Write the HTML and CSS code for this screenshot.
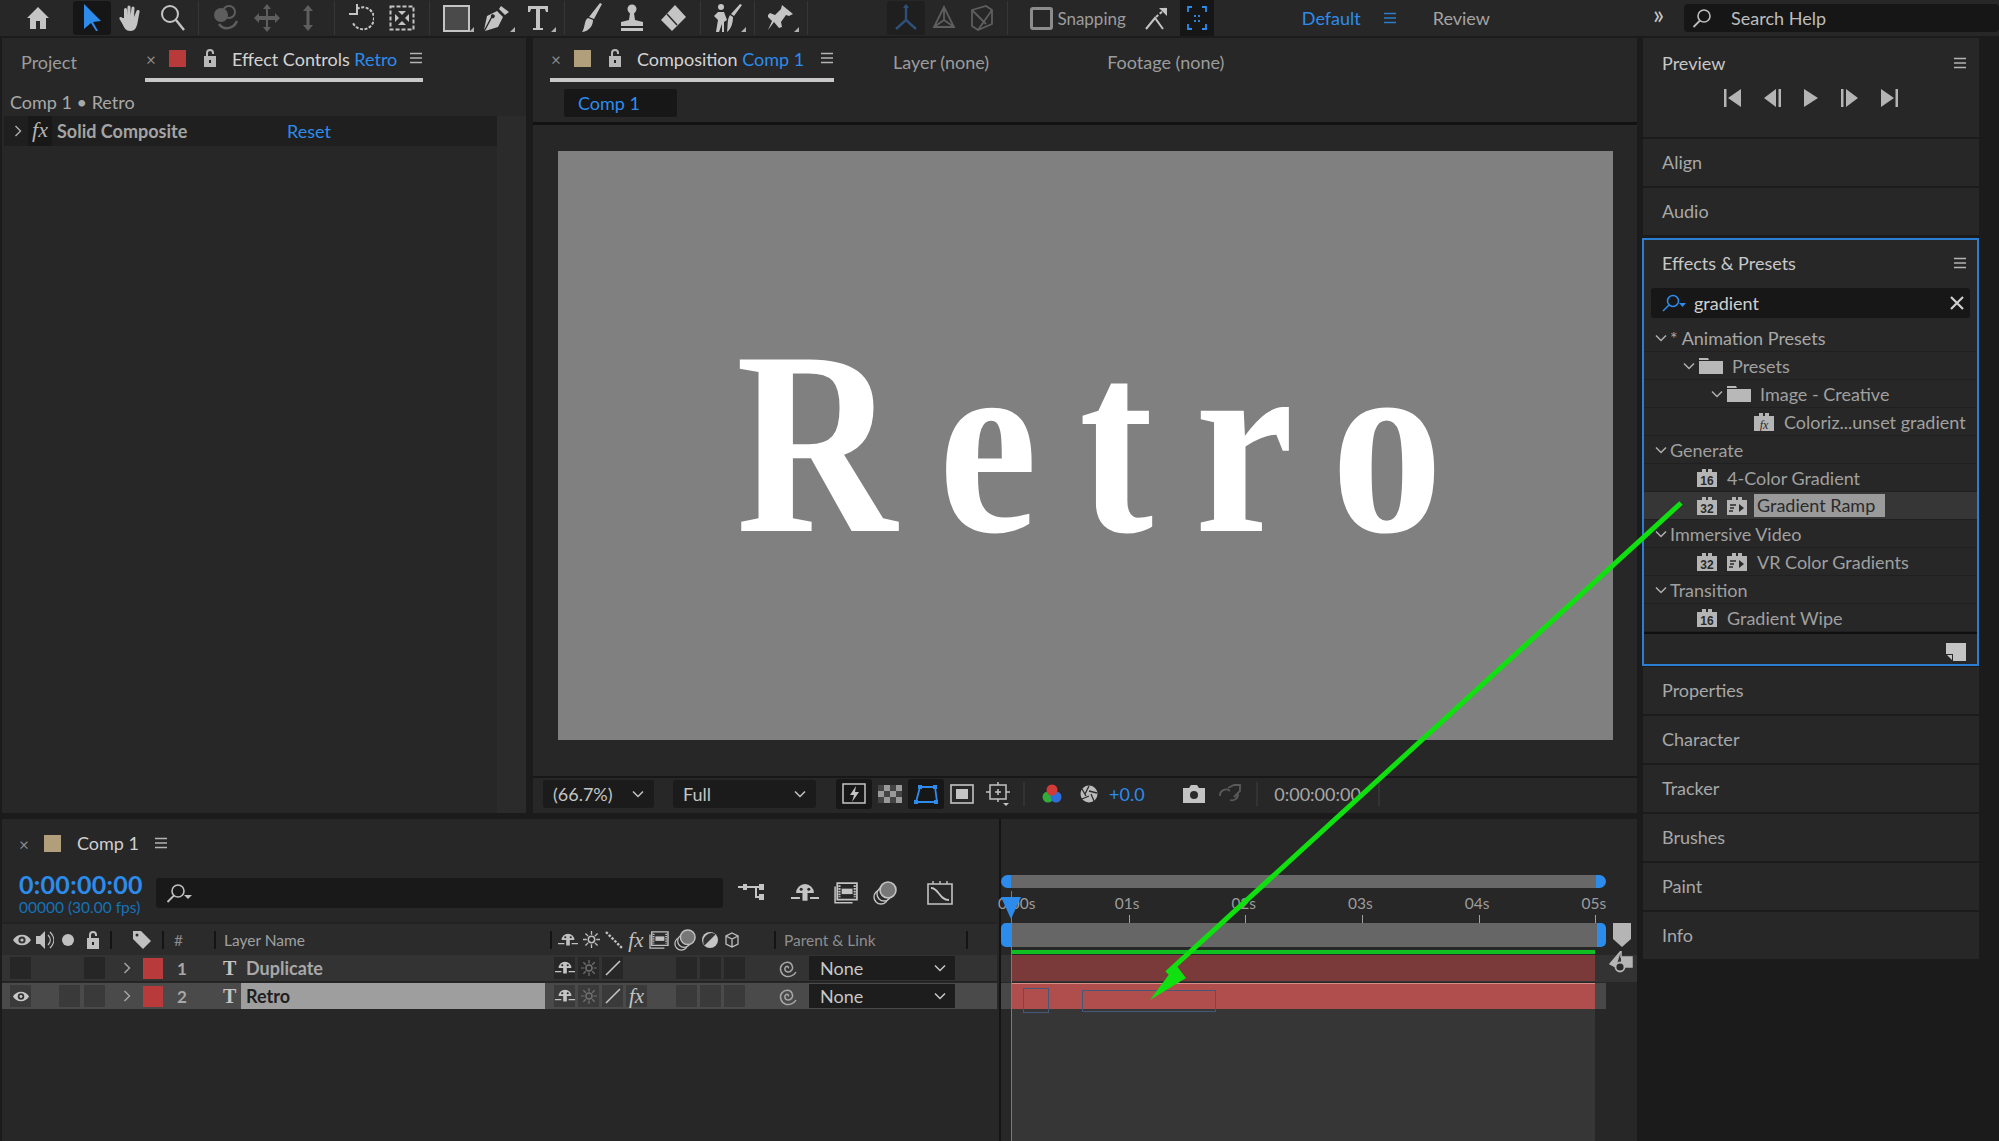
FILE: index.html
```html
<!DOCTYPE html>
<html lang="en">
<head>
    <meta charset="UTF-8">
    <title>After Effects</title>
    <link rel="stylesheet" href="styles.css">
</head>
<body>

<svg class="sprite" width="0" height="0">
    <symbol id="i-menu" viewBox="0 0 14 12"><path d="M1 1.5h12M1 6h12M1 10.5h12" stroke="currentColor" stroke-width="1.6" fill="none"/></symbol>
    <symbol id="i-lock" viewBox="0 0 14 18"><path d="M2 8h10v9H2z M4 8V4a3 3 0 0 1 6 0v1" fill="none" stroke="currentColor" stroke-width="2"/><path d="M2 8h10v9H2z" fill="currentColor"/><rect x="6" y="11" width="2" height="3" fill="#222"/></symbol>
    <symbol id="i-chev" viewBox="0 0 12 8"><path d="M1 1.5l5 5 5-5" fill="none" stroke="currentColor" stroke-width="1.5"/></symbol>
    <symbol id="i-right" viewBox="0 0 8 12"><path d="M1.5 1l5 5-5 5" fill="none" stroke="currentColor" stroke-width="1.4"/></symbol>
    <symbol id="i-search" viewBox="0 0 22 20"><circle cx="12" cy="8" r="6" fill="none" stroke="currentColor" stroke-width="1.6"/><path d="M8 12.5L1.5 19" stroke="currentColor" stroke-width="1.8"/></symbol>
    <symbol id="i-folder" viewBox="0 0 24 16"><path d="M0 2V0h9l1 2zM0 3h24v13H0z" fill="currentColor"/></symbol>
    <symbol id="i-16" viewBox="0 0 20 18"><path d="M0 3h5V0h4v3h2V0h4v3h5v15H0z" fill="#b5b5b5"/><text x="10" y="16" font-size="12" font-weight="700" font-family="Liberation Sans" text-anchor="middle" fill="#2a2a2a">16</text></symbol>
    <symbol id="i-32" viewBox="0 0 20 18"><path d="M0 3h5V0h4v3h2V0h4v3h5v15H0z" fill="#b5b5b5"/><text x="10" y="16" font-size="12" font-weight="700" font-family="Liberation Sans" text-anchor="middle" fill="#2a2a2a">32</text></symbol>
    <symbol id="i-fx" viewBox="0 0 20 18"><path d="M0 3h5V0h4v3h2V0h4v3h5v15H0z" fill="#b5b5b5"/><text x="10" y="16" font-size="12" font-style="italic" font-family="Liberation Serif" text-anchor="middle" fill="#2a2a2a">fx</text></symbol>
    <symbol id="i-gpu" viewBox="0 0 20 18"><path d="M0 3h5V0h4v3h2V0h4v3h5v15H0z" fill="#b5b5b5"/><path d="M3 8h6M3 11h4M2 14h4" stroke="#2a2a2a" stroke-width="1.3"/><path d="M12 7l5 4-5 4z" fill="#2a2a2a"/></symbol>
    <symbol id="i-shy" viewBox="0 0 22 18"><path d="M4 9a7 7 0 0 1 14 0H13v6h-4V9z" fill="currentColor"/><circle cx="8" cy="6" r="1.2" fill="#2b2b2b"/><circle cx="14" cy="6" r="1.2" fill="#2b2b2b"/><path d="M0 13h7M15 13h7" stroke="currentColor" stroke-width="1.6"/></symbol>
    <symbol id="i-sun" viewBox="0 0 18 18"><circle cx="9" cy="9" r="3.4" fill="none" stroke="currentColor" stroke-width="1.6"/><path d="M9 0v4M9 14v4M0 9h4M14 9h4M2.6 2.6l2.8 2.8M12.6 12.6l2.8 2.8M2.6 15.4l2.8-2.8M12.6 5.4l2.8-2.8" stroke="currentColor" stroke-width="1.4"/></symbol>
    <symbol id="i-film" viewBox="0 0 22 20"><path d="M3 1h18v15H3z" fill="none" stroke="currentColor" stroke-width="1.6"/><path d="M1 4v15h16" fill="none" stroke="currentColor" stroke-width="1.4"/><path d="M7 6h10v5H7z" fill="currentColor"/><path d="M5 3v11M19 3v11" stroke="currentColor" stroke-width="2" stroke-dasharray="1.5 1"/></symbol>
    <symbol id="i-blur" viewBox="0 0 24 24"><circle cx="8" cy="16" r="7" fill="none" stroke="currentColor" stroke-width="1.4"/><circle cx="11" cy="13" r="7" fill="#2a2a2a" stroke="currentColor" stroke-width="1.4"/><circle cx="15" cy="9" r="8" fill="#777" stroke="currentColor" stroke-width="1.6"/></symbol>
    <symbol id="i-spiral" viewBox="0 0 20 20"><path d="M10 10.5c1.500-1 .5-3-1.500-2.500-2.500.6-2.800 4-.5 5.500 3 1.800 7-.5 6.800-4.500C14.600 5 10 2.800 6 4.500 1.500 6.500.800 13 4.500 16.500c2.800 2.500 7.500 2.800 11 .5" fill="none" stroke="currentColor" stroke-width="1.5" transform="rotate(-25 10 10)"/></symbol>
    <symbol id="i-eye" viewBox="0 0 20 14"><path d="M1 7c4-7 14-7 18 0-4 7-14 7-18 0z" fill="currentColor"/><circle cx="10" cy="7" r="3.600" fill="#333"/><circle cx="10" cy="7" r="1.600" fill="currentColor"/></symbol>
</svg>

<header class="toolbar">
    <div class="tool-cell home">
        <svg width="24" height="24" viewBox="0 0 24 24"><path d="M12 1L1 12h3v11h6v-8h4v8h6V12h3z" fill="#c4c4c4"/></svg>
    </div>
    <div class="tool-cell active">
        <svg width="22" height="28" viewBox="0 0 22 28"><path d="M3 0l17 17-8 1 5 9h-2l-5-8-7 6z" fill="#2d8ceb"/></svg>
    </div>
    <div class="tool-cell">
        <svg width="24" height="28" viewBox="0 0 24 28"><path d="M5 14V5.500a1.500 1.500 0 0 1 3 0V11l.5-8a1.500 1.500 0 0 1 3 0v8l1-7a1.500 1.500 0 0 1 3 0l-.5 9 2.500-6a1.500 1.500 0 0 1 3 1l-2 11c-1 5-3 8-7 8-5 0-6-3-8-7l-3-5c-.8-2 2-3 3-1z" fill="#c4c4c4"/></svg>
    </div>
    <div class="tool-cell sep-after">
        <svg width="26" height="28" viewBox="0 0 26 28"><circle cx="11" cy="10" r="8" fill="none" stroke="#c4c4c4" stroke-width="2"/><path d="M17 16l8 10" stroke="#c4c4c4" stroke-width="2.400"/></svg>
    </div>
    <div class="tool-cell dim">
        <svg width="30" height="28" viewBox="0 0 30 28"><circle cx="10" cy="11" r="7" fill="currentColor"/><circle cx="18" cy="8" r="6" fill="none" stroke="currentColor" stroke-width="2"/><path d="M8 20c4 6 14 6 18-3" fill="none" stroke="currentColor" stroke-width="2.500"/></svg>
    </div>
    <div class="tool-cell dim">
        <svg width="28" height="28" viewBox="0 0 28 28"><path d="M14 0l4 5h-3v7h7V9l5 5-5 5v-3h-7v7h3l-4 5-4-5h3v-7H6v3l-5-5 5-5v3h7V5h-3z" fill="currentColor"/></svg>
    </div>
    <div class="tool-cell dim sep-after">
        <svg width="16" height="28" viewBox="0 0 16 28"><path d="M8 1l5 6H9.500v14H13l-5 6-5-6h3.500V7H3z" fill="currentColor"/></svg>
    </div>
    <div class="tool-cell">
        <svg width="26" height="28" viewBox="0 0 26 28"><path d="M9 5a11 11 0 1 1 -4 14" fill="none" stroke="#c4c4c4" stroke-width="2" stroke-dasharray="3 1.500"/><path d="M9 0v10H1" fill="none" stroke="#c4c4c4" stroke-width="2"/></svg>
    </div>
    <div class="tool-cell sep-after">
        <svg width="26" height="26" viewBox="0 0 26 26"><rect x="1.500" y="1.500" width="23" height="23" fill="none" stroke="#c4c4c4" stroke-width="2" stroke-dasharray="4 2"/><path d="M9 6h8l-4 4zM9 20h8l-4-4zM6 9v8l4-4zM20 9v8l-4-4z" fill="#c4c4c4"/></svg>
    </div>
    <div class="tool-cell corner">
        <svg width="27" height="27" viewBox="0 0 27 27"><rect x="1" y="1" width="25" height="25" fill="#4a4a4a" stroke="#c4c4c4" stroke-width="2"/></svg>
    </div>
    <div class="tool-cell corner">
        <svg width="26" height="28" viewBox="0 0 26 28"><path d="M17 2l8 6-4 3-6-6zM13 7l6 6-5 10-13 4L8 14a2 2 0 1 0-1-1L0 26l3-14z" fill="#c4c4c4"/></svg>
    </div>
    <div class="tool-cell corner sep-after">
        <svg width="24" height="28" viewBox="0 0 24 28"><path d="M2 2h20v6h-2l-1-3h-5v19h3v2H7v-2h3V5H5L4 8H2z" fill="#c4c4c4"/></svg>
    </div>
    <div class="tool-cell">
        <svg width="22" height="30" viewBox="0 0 22 30"><path d="M19 0l2 1-8 15-5-2zM7 15l5 2c0 5-3 11-11 12 3-3 2-12 6-14z" fill="#c4c4c4"/></svg>
    </div>
    <div class="tool-cell">
        <svg width="26" height="28" viewBox="0 0 26 28"><circle cx="13" cy="5" r="4.500" fill="#c4c4c4"/><path d="M11 9h4l1 7 8 2v4H2v-4l8-2zM2 24h22v3H2z" fill="#c4c4c4"/></svg>
    </div>
    <div class="tool-cell sep-after">
        <svg width="28" height="28" viewBox="0 0 28 28"><path d="M16 1l11 12-14 14L2 16z" fill="#c4c4c4"/><path d="M8 10l10 11" stroke="#2a2a2a" stroke-width="1.500"/></svg>
    </div>
    <div class="tool-cell corner sep-after">
        <svg width="30" height="30" viewBox="0 0 30 30"><circle cx="9" cy="4" r="3" fill="#c4c4c4"/><path d="M6 9h6l3 8-3 2v10h-2v-8l-3 8H4l2-12-4-4z" fill="#c4c4c4"/><path d="M28 1l2 1-8 11-3-2zM18 12l3 2c0 6-2 12-6 15 1-6 0-13 3-17z" fill="#c4c4c4"/></svg>
    </div>
    <div class="tool-cell corner sep-after pin">
        <svg width="26" height="28" viewBox="0 0 26 28"><path d="M14 1l11 9-4 2-3-1-5 7 1 5-3 1-5-6-6 8 4-9-5-5 3-3 5 2 6-6z" fill="#c4c4c4"/></svg>
    </div>

    <div class="axis-group">
        <div class="tool-cell axis-on">
            <svg width="26" height="28" viewBox="0 0 26 28"><path d="M13 1v15M13 16L3 25M13 16l10 9" stroke="#2f4f78" stroke-width="2.400" fill="none"/><path d="M13 0l-3 4h6z" fill="#2f4f78"/></svg>
        </div>
        <div class="tool-cell dim">
            <svg width="26" height="28" viewBox="0 0 26 28"><path d="M13 3L3 23h20zM13 3v13L3 23M13 16l10 7" stroke="currentColor" stroke-width="1.800" fill="none"/></svg>
        </div>
        <div class="tool-cell dim sep-after">
            <svg width="26" height="28" viewBox="0 0 26 28"><path d="M3 6l14-4 6 4v14L9 26l-6-4zM3 6l14 14M23 6L9 26" stroke="currentColor" stroke-width="1.800" fill="none"/></svg>
        </div>
    </div>

    <div class="snap">
        <span class="snap-box"></span>
        <span class="snap-label">Snapping</span>
        <svg class="snap-icon" width="24" height="24" viewBox="0 0 24 24"><path d="M2 23l9-11 8 11" fill="none" stroke="#c4c4c4" stroke-width="2"/><path d="M12 11L22 2" stroke="#c4c4c4" stroke-width="2" stroke-dasharray="3 2"/><path d="M15 2h8v8z" fill="#c4c4c4"/></svg>
        <span class="snap-on">
            <svg width="20" height="24" viewBox="0 0 20 24"><path d="M1 6V1h4M15 1h4v5M1 18v5h4M15 23h4v-5M8 9v2M12 9v2M8 14v2M12 14v2" stroke="#2d8ceb" stroke-width="1.800" fill="none"/></svg>
        </span>
    </div>

    <nav class="workspaces">
        <span class="ws-current">Default</span>
        <svg class="ws-menu" width="14" height="12"><use href="#i-menu"/></svg>
        <span class="ws-item">Review</span>
    </nav>
    <span class="more">»</span>
    <div class="help-search">
        <svg width="22" height="20"><use href="#i-search"/></svg>
        <span>Search Help</span>
    </div>
</header>

<div class="workspace">
    <div class="main-col">
        <div class="upper">

            <section class="panel effects-panel">
                <div class="tabs">
                    <span class="tab-plain tab-project">Project</span>
                    <div class="tab tab-effect">
                        <span class="tab-x">×</span>
                        <span class="swatch red"></span>
                        <svg class="tab-lock" width="14" height="18"><use href="#i-lock"/></svg>
                        <span class="tab-title">Effect Controls <b>Retro</b></span>
                        <svg class="tab-menu" width="14" height="12"><use href="#i-menu"/></svg>
                    </div>
                </div>
                <div class="fx-crumb">Comp 1 • Retro</div>
                <div class="fx-row">
                    <svg class="fx-arrow" width="8" height="12"><use href="#i-right"/></svg>
                    <span class="fx-badge">fx</span>
                    <span class="fx-name">Solid Composite</span>
                    <span class="fx-reset">Reset</span>
                </div>
                <div class="fx-scroll"></div>
            </section>

            <section class="panel comp-panel">
                <div class="tabs">
                    <div class="tab tab-comp">
                        <span class="tab-x">×</span>
                        <span class="swatch tan"></span>
                        <svg class="tab-lock" width="14" height="18"><use href="#i-lock"/></svg>
                        <span class="tab-title">Composition <b>Comp 1</b></span>
                        <svg class="tab-menu" width="14" height="12"><use href="#i-menu"/></svg>
                    </div>
                    <span class="tab-plain tab-layer">Layer (none)</span>
                    <span class="tab-plain tab-footage">Footage (none)</span>
                </div>
                <div class="comp-crumb"><span class="comp-chip">Comp 1</span></div>
                <div class="viewer">
                    <div class="comp-frame"><span class="comp-text">Retro</span></div>
                </div>
                <div class="viewer-bar">
                    <div class="select select-zoom"><span>(66.7%)</span><svg width="12" height="8"><use href="#i-chev"/></svg></div>
                    <div class="select select-res"><span>Full</span><svg width="12" height="8"><use href="#i-chev"/></svg></div>
                    <div class="vb-icons">
                        <span class="vb-box">
                            <svg width="24" height="22" viewBox="0 0 24 22"><path d="M1 1h22v19H1z" fill="none" stroke="#c4c4c4" stroke-width="1.500"/><path d="M14 3l-6 9h4l-2 7 7-10h-4z" fill="#c4c4c4"/></svg>
                        </span>
                        <span class="vb-cell">
                            <svg width="24" height="18" viewBox="0 0 24 18"><rect width="24" height="18" fill="#999"/><path d="M0 0h6v6H0zM12 0h6v6h-6zM6 6h6v6H6zM18 6h6v6h-6zM0 12h6v6H0zM12 12h6v6h-6z" fill="#444"/></svg>
                        </span>
                        <span class="vb-box">
                            <svg width="24" height="20" viewBox="0 0 24 20"><path d="M6 3h15l2 15H2z" fill="none" stroke="#2d8ceb" stroke-width="1.800"/><path d="M4 1h4v4H4zM19 1h4v4h-4zM0 16h4v4H0zM20 16h4v4h-4z" fill="#2d8ceb"/></svg>
                        </span>
                        <span class="vb-cell">
                            <svg width="24" height="20" viewBox="0 0 24 20"><rect x="1" y="1" width="22" height="18" fill="none" stroke="#c4c4c4" stroke-width="1.600"/><rect x="6" y="5" width="12" height="10" fill="#c4c4c4"/></svg>
                        </span>
                        <span class="vb-cell">
                            <svg width="24" height="24" viewBox="0 0 24 24"><path d="M4 3h16v14H4zM0 10h4M20 10h4M12 0v3M12 17v3M9 10h6M12 7v6" fill="none" stroke="#c4c4c4" stroke-width="1.500"/><path d="M17 21h6l-3 3z" fill="#c4c4c4"/></svg>
                        </span>
                    </div>
                    <span class="vb-sep"></span>
                    <svg class="vb-rgb" width="20" height="20" viewBox="0 0 20 20"><circle cx="6" cy="13" r="5.500" fill="#2fae3a"/><circle cx="14" cy="13" r="5.500" fill="#2d6fd8"/><circle cx="10" cy="6" r="5.500" fill="#d23a3a"/></svg>
                    <svg class="vb-exp" width="20" height="20" viewBox="0 0 20 20"><circle cx="10" cy="10" r="8.500" fill="#bbb"/><path d="M10 2L6 10M18 9L10 7M15 17L12 10M3 15l7-3M3 5l4 7" stroke="#2a2a2a" stroke-width="1.300"/></svg>
                    <span class="vb-value">+0.0</span>
                    <svg class="vb-cam" width="22" height="18" viewBox="0 0 22 18"><path d="M0 3h6l2-3h6l2 3h6v15H0z" fill="#c4c4c4"/><circle cx="11" cy="10" r="4" fill="#2a2a2a"/></svg>
                    <svg class="vb-snap" width="24" height="20" viewBox="0 0 24 20"><path d="M2 12a6 6 0 0 1 10-5M12 16a6 6 0 0 0 8-6M10 4l6-3h6v6l-6 6" fill="none" stroke="#5a5a5a" stroke-width="1.800"/></svg>
                    <span class="vb-sep"></span>
                    <span class="vb-time">0:00:00:00</span>
                    <span class="vb-sep"></span>
                </div>
            </section>
        </div>

        <section class="panel timeline">
            <div class="tl-left">
                <div class="tl-tab">
                    <span class="tab-x">×</span>
                    <span class="swatch tan"></span>
                    <span class="tl-tab-name">Comp 1</span>
                    <svg class="tab-menu" width="14" height="12"><use href="#i-menu"/></svg>
                </div>
                <div class="tl-controls">
                    <div class="tl-time">
                        <div class="tl-timecode">0:00:00:00</div>
                        <div class="tl-frames">00000 (30.00 fps)</div>
                    </div>
                    <div class="tl-search">
                        <svg width="22" height="20"><use href="#i-search"/></svg>
                        <span class="caret"></span>
                    </div>
                    <svg class="tc-icon" width="28" height="24" viewBox="0 0 28 24"><path d="M0 6h6M8 6h10M18 6v10h4M18 6h4" stroke="#c4c4c4" stroke-width="2" fill="none"/><rect x="5" y="3" width="4" height="6" fill="#c4c4c4"/><path d="M21 3h5v6h-5zM21 13h5v6h-5z" fill="#c4c4c4"/></svg>
                    <svg class="tc-icon" width="28" height="24"><use href="#i-shy"/></svg>
                    <svg class="tc-icon" width="24" height="24"><use href="#i-film"/></svg>
                    <svg class="tc-icon" width="24" height="24"><use href="#i-blur"/></svg>
                    <svg class="tc-icon tc-graph" width="26" height="24" viewBox="0 0 26 24"><path d="M1 3h24v20H1z" fill="none" stroke="#c4c4c4" stroke-width="1.600"/><path d="M4 7c8 0 8 12 18 12" fill="none" stroke="#c4c4c4" stroke-width="1.800"/><path d="M6 0v3M13 0v3M20 0v3" stroke="#c4c4c4" stroke-width="1.400"/></svg>
                </div>

                <div class="layer-head">
                    <svg class="h-eye" width="20" height="14"><use href="#i-eye"/></svg>
                    <svg class="h-audio" width="18" height="20" viewBox="0 0 18 20"><path d="M0 6h4l5-5v18l-5-5H0z" fill="currentColor"/><path d="M12 5c3 3 3 7 0 10M14 2c5 5 5 11 0 16" fill="none" stroke="currentColor" stroke-width="1.300"/></svg>
                    <span class="h-dot"></span>
                    <svg class="h-lock" width="14" height="18"><use href="#i-lock"/></svg>
                    <span class="h-sep s1"></span>
                    <svg class="h-tag" width="20" height="20" viewBox="0 0 20 20"><path d="M1 1h8l10 10-8 8L1 9z" fill="currentColor"/><circle cx="5" cy="5" r="1.500" fill="#2b2b2b"/></svg>
                    <span class="h-sep s2"></span>
                    <span class="h-num">#</span>
                    <span class="h-sep s3"></span>
                    <span class="h-name">Layer Name</span>
                    <span class="h-sep s4"></span>
                    <div class="h-switches">
                        <svg width="20" height="18"><use href="#i-shy"/></svg>
                        <svg width="17" height="17"><use href="#i-sun"/></svg>
                        <svg width="18" height="18" viewBox="0 0 18 18"><path d="M1 1l16 16" stroke="currentColor" stroke-width="2.400" stroke-dasharray="2.500 1.500"/></svg>
                        <span class="sw-fx">fx</span>
                        <svg width="20" height="18"><use href="#i-film"/></svg>
                        <svg width="22" height="22"><use href="#i-blur"/></svg>
                        <svg width="18" height="18" viewBox="0 0 18 18"><circle cx="9" cy="9" r="8" fill="#c4c4c4"/><path d="M3.500 14.500L14.500 3.500A8 8 0 0 0 3.500 14.500z" fill="#333"/></svg>
                        <svg width="16" height="16" viewBox="0 0 16 16"><path d="M8 1l6 3v8l-6 3-6-3V4zM2 4l6 3 6-3M8 7v8" fill="none" stroke="currentColor" stroke-width="1.300"/></svg>
                    </div>
                    <span class="h-sep s5"></span>
                    <span class="h-parent">Parent &amp; Link</span>
                    <span class="h-sep s6"></span>
                </div>

                <div class="layer">
                    <span class="cell-box"></span><span class="cell-gap"></span><span class="cell-box cell-lock"></span>
                    <svg class="l-chev" width="8" height="12"><use href="#i-right"/></svg>
                    <span class="l-swatch"></span>
                    <span class="l-num">1</span>
                    <span class="l-t">T</span>
                    <span class="l-name">Duplicate</span>
                    <div class="l-switches">
                        <span class="sw"><svg width="20" height="18"><use href="#i-shy"/></svg></span>
                        <span class="sw sw-dim"><svg width="16" height="16"><use href="#i-sun"/></svg></span>
                        <span class="sw"><svg width="16" height="16" viewBox="0 0 16 16"><path d="M1 15L15 1" stroke="currentColor" stroke-width="1.600"/></svg></span>
                        <span class="sw-empty"></span>
                    </div>
                    <div class="l-switches l-boxes"><span class="sw"></span><span class="sw"></span><span class="sw"></span></div>
                    <svg class="l-spiral" width="20" height="20"><use href="#i-spiral"/></svg>
                    <div class="l-parent"><span>None</span><svg width="12" height="8"><use href="#i-chev"/></svg></div>
                </div>
                <div class="layer layer-selected">
                    <span class="cell-box"><svg width="18" height="13"><use href="#i-eye"/></svg></span><span class="cell-gap-s"></span><span class="cell-box"></span><span class="cell-box cell-lock-s"></span>
                    <svg class="l-chev" width="8" height="12"><use href="#i-right"/></svg>
                    <span class="l-swatch"></span>
                    <span class="l-num">2</span>
                    <span class="l-t">T</span>
                    <span class="l-name">Retro</span>
                    <div class="l-switches">
                        <span class="sw"><svg width="20" height="18"><use href="#i-shy"/></svg></span>
                        <span class="sw sw-dim"><svg width="16" height="16"><use href="#i-sun"/></svg></span>
                        <span class="sw"><svg width="16" height="16" viewBox="0 0 16 16"><path d="M1 15L15 1" stroke="currentColor" stroke-width="1.600"/></svg></span>
                        <span class="sw sw-fx">fx</span>
                    </div>
                    <div class="l-switches l-boxes"><span class="sw"></span><span class="sw"></span><span class="sw"></span></div>
                    <svg class="l-spiral" width="20" height="20"><use href="#i-spiral"/></svg>
                    <div class="l-parent"><span>None</span><svg width="12" height="8"><use href="#i-chev"/></svg></div>
                </div>
            </div>

            <div class="tl-right">
                <div class="nav-bar"><span class="nav-cap"></span><span class="nav-fill"></span><span class="nav-cap nav-cap-r"></span></div>
                <div class="ruler">
                    <span class="tick tick-0">0:00s</span>
                    <span class="tick">01s</span>
                    <span class="tick">02s</span>
                    <span class="tick">03s</span>
                    <span class="tick">04s</span>
                    <span class="tick">05s</span>
                </div>
                <div class="work-bar"><span class="work-cap"></span><span class="work-fill"></span><span class="work-cap work-cap-r"></span></div>
                <div class="preview-line"></div>
                <div class="track"><div class="clip clip-1"></div></div>
                <div class="track track-selected">
                    <div class="clip clip-2">
                        <span class="mark mark-a"></span>
                        <span class="mark mark-b"></span>
                    </div>
                </div>
                <div class="track-empty"></div>
                <div class="playhead"></div>
                <div class="playhead-head"></div>
                <svg class="end-shield" width="20" height="24" viewBox="0 0 20 24"><path d="M1 0h18v16l-9 8-9-8z" fill="#b5b5b5"/></svg>
                <svg class="end-tool" width="24" height="22" viewBox="0 0 24 22"><path d="M12 0v6h11v10H12M12 0L1 13l6 3" fill="#b5b5b5" stroke="#b5b5b5" stroke-width="1.500"/><circle cx="11" cy="16" r="4.500" fill="#2a2a2a" stroke="#b5b5b5" stroke-width="1.800"/></svg>
            </div>
        </section>
    </div>

    <aside class="side">
        <section class="panel preview-panel">
            <div class="side-head"><span>Preview</span><svg class="tab-menu" width="14" height="12"><use href="#i-menu"/></svg></div>
            <div class="transport">
                <svg width="20" height="20" viewBox="0 0 20 20"><path d="M1 1h2.500v18H1zM18 1v18L5 10z" fill="currentColor"/></svg>
                <svg width="20" height="20" viewBox="0 0 20 20"><path d="M13 1v18L1 10zM15.500 1H18v18h-2.500z" fill="currentColor"/></svg>
                <svg width="16" height="20" viewBox="0 0 16 20"><path d="M1 1l14 9-14 9z" fill="currentColor"/></svg>
                <svg width="20" height="20" viewBox="0 0 20 20"><path d="M2 1h2.500v18H2zM7 1l12 9-12 9z" fill="currentColor"/></svg>
                <svg width="20" height="20" viewBox="0 0 20 20"><path d="M2 1l13 9-13 9zM16.500 1H19v18h-2.500z" fill="currentColor"/></svg>
            </div>
        </section>
        <section class="panel side-closed">Align</section>
        <section class="panel side-closed">Audio</section>

        <section class="panel presets">
            <div class="side-head presets-head"><span>Effects &amp; Presets</span><svg class="tab-menu" width="14" height="12"><use href="#i-menu"/></svg></div>
            <div class="presets-search">
                <svg class="ps-glass" width="24" height="18" viewBox="0 0 24 18"><circle cx="11" cy="7" r="5.500" fill="none" stroke="#2d8ceb" stroke-width="1.500"/><path d="M7 11L1 17" stroke="#2d8ceb" stroke-width="1.600"/><path d="M17 9h7l-3.500 4z" fill="#2d8ceb"/></svg>
                <span class="ps-value">gradient</span>
                <svg class="ps-clear" width="14" height="14" viewBox="0 0 14 14"><path d="M1 1l12 12M13 1L1 13" stroke="#d0d0d0" stroke-width="2.200"/></svg>
            </div>
            <ul class="tree">
                <li class="d0"><svg class="tw" width="12" height="8"><use href="#i-chev"/></svg><span class="t-label t-first">* Animation Presets</span></li>
                <li class="d1"><svg class="tw" width="12" height="8"><use href="#i-chev"/></svg><svg class="folder" width="24" height="18"><use href="#i-folder"/></svg><span class="t-label">Presets</span></li>
                <li class="d2"><svg class="tw" width="12" height="8"><use href="#i-chev"/></svg><svg class="folder" width="24" height="18"><use href="#i-folder"/></svg><span class="t-label">Image - Creative</span></li>
                <li class="d3"><svg class="badge" width="20" height="18"><use href="#i-fx"/></svg><span class="t-label">Coloriz...unset gradient</span></li>
                <li class="d0"><svg class="tw" width="12" height="8"><use href="#i-chev"/></svg><span class="t-label">Generate</span></li>
                <li class="d4"><svg class="badge" width="20" height="18"><use href="#i-16"/></svg><span class="t-label">4-Color Gradient</span></li>
                <li class="d4 t-hover"><svg class="badge" width="20" height="18"><use href="#i-32"/></svg><svg class="badge b2" width="20" height="18"><use href="#i-gpu"/></svg><span class="t-label t-picked">Gradient Ramp</span></li>
                <li class="d0"><svg class="tw" width="12" height="8"><use href="#i-chev"/></svg><span class="t-label">Immersive Video</span></li>
                <li class="d4"><svg class="badge" width="20" height="18"><use href="#i-32"/></svg><svg class="badge b2" width="20" height="18"><use href="#i-gpu"/></svg><span class="t-label t-after">VR Color Gradients</span></li>
                <li class="d0"><svg class="tw" width="12" height="8"><use href="#i-chev"/></svg><span class="t-label">Transition</span></li>
                <li class="d4"><svg class="badge" width="20" height="18"><use href="#i-16"/></svg><span class="t-label">Gradient Wipe</span></li>
            </ul>
            <div class="presets-foot">
                <svg width="20" height="20" viewBox="0 0 20 20"><path d="M0 2h20v18H7v-7H0z" fill="#c4c4c4"/><path d="M1 14h5v5z" fill="#c4c4c4"/></svg>
            </div>
        </section>

        <section class="panel side-closed">Properties</section>
        <section class="panel side-closed">Character</section>
        <section class="panel side-closed">Tracker</section>
        <section class="panel side-closed">Brushes</section>
        <section class="panel side-closed">Paint</section>
        <section class="panel side-closed">Info</section>
    </aside>
</div>

<!-- flecha verde encima de todo -->
<svg class="green-arrow" width="1999" height="1141" viewBox="0 0 1999 1141">
    <path d="M1681 503L1167 973" stroke="#10e010" stroke-width="5"/>
    <path d="M1150 1000L1176 965L1186 978z" fill="#10e010"/>
</svg>

</body>
</html>
```

FILE: styles.css
```css
* {
    margin: 0;
    padding: 0;
    box-sizing: border-box;
}
body {
    width: 1999px;
    height: 1141px;
    overflow: hidden;
    position: relative;
    background: #1b1b1b;
    color: #b4b4b4;
    font-family: "Lato", "Open Sans", sans-serif;
    font-size: 18px;
}
b {
    font-weight: 400;
    color: #2d8ceb;
}
svg {
    display: block;
    flex: none;
}
ul {
    list-style: none;
}
.sprite {
    position: absolute;
}

/* barra de herramientas */
.toolbar {
    height: 36px;
    background: #272727;
    display: flex;
    align-items: center;
    padding-left: 18px;
}
.tool-cell {
    width: 41px;
    height: 34px;
    display: flex;
    align-items: center;
    justify-content: center;
    position: relative;
    color: #5e5e5e;
}
.tool-cell.home {
    width: 40px;
    margin-right: 15px;
}
.tool-cell.active {
    background: #161616;
    border-radius: 3px;
    width: 38px;
}
.sep-after {
    margin-right: 13px;
}
.sep-after::after {
    content: "";
    position: absolute;
    right: -7px;
    top: 0;
    bottom: 0;
    width: 1px;
    background: #363636;
}
.corner::before {
    content: "";
    position: absolute;
    right: 2px;
    bottom: 3px;
    border-left: 5px solid transparent;
    border-bottom: 5px solid #b0b0b0;
}
.axis-group {
    display: flex;
    margin-left: 73px;
    color: #5e5e5e;
}
.axis-group .tool-cell {
    width: 38px;
}
.axis-on {
    background: #1f1f1f;
    border-radius: 3px;
}
.snap {
    display: flex;
    align-items: center;
    margin-left: 16px;
}
.snap-box {
    width: 23px;
    height: 23px;
    border: 3px solid #8c8c8c;
    border-radius: 3px;
}
.snap-label {
    margin-left: 4px;
    color: #9c9c9c;
    font-size: 17px;
}
.snap-icon {
    margin-left: 18px;
}
.snap-on {
    margin-left: 12px;
    width: 34px;
    height: 36px;
    background: #161616;
    display: flex;
    align-items: center;
    justify-content: center;
}
.workspaces {
    display: flex;
    align-items: center;
    margin-left: 88px;
}
.ws-current {
    color: #2d8ceb;
}
.ws-menu {
    margin-left: 22px;
    color: #2d7cc9;
}
.ws-item {
    margin-left: 36px;
    color: #a4a4a4;
}
.more {
    margin-left: 163px;
    font-size: 26px;
    line-height: 26px;
    margin-top: -8px;
    color: #c8c8c8;
}
.help-search {
    margin-left: 20px;
    width: 316px;
    height: 28px;
    background: #161616;
    border-radius: 4px;
    display: flex;
    align-items: center;
    padding-left: 8px;
    color: #bdbdbd;
}
.help-search span {
    margin-left: 17px;
}

/* distribucion general */
.workspace {
    display: flex;
    height: 1105px;
    padding: 2px 0 0 2px;
}
.main-col {
    width: 1635px;
    display: flex;
    flex-direction: column;
}
.upper {
    display: flex;
    height: 775px;
}
.panel {
    background: #272727;
}
.effects-panel {
    width: 524px;
    position: relative;
}
.comp-panel {
    width: 1104px;
    margin-left: 7px;
    display: flex;
    flex-direction: column;
}

/* pestanas */
.tabs {
    height: 44px;
    display: flex;
    position: relative;
}
.tab {
    display: flex;
    align-items: center;
    height: 44px;
    border-bottom: 4px solid #c8c8c8;
}
.tab-effect {
    margin-left: 59px;
    width: 278px;
}
.tab-comp {
    margin-left: 17px;
    width: 284px;
}
.tab-plain {
    line-height: 48px;
    color: #9c9c9c;
}
.tab-project {
    margin-left: 19px;
    width: 65px;
}
.tab-layer {
    margin-left: 59px;
}
.tab-footage {
    margin-left: 118px;
}
.tab-x {
    font-size: 17px;
    color: #8c8c8c;
    width: 24px;
    padding-left: 1px;
    padding-top: 2px;
}
.swatch {
    width: 17px;
    height: 17px;
    flex: none;
}
.red {
    background: #b83a3a;
}
.tan {
    background: #b19e7a;
}
.tab-lock {
    margin-left: 17px;
    color: #b8b8b8;
}
.tab-title {
    margin-left: 15px;
    color: #d4d4d4;
    white-space: nowrap;
    padding-top: 1px;
}
.tab-menu {
    color: #b4b4b4;
}
.tab .tab-menu {
    margin-left: auto;
    margin-right: 0;
}

/* effect controls */
.fx-crumb {
    padding: 9px 0 0 8px;
    height: 34px;
    color: #a8a8a8;
}
.fx-row {
    margin-left: 2px;
    width: 493px;
    height: 30px;
    background: #1f1f1f;
    display: flex;
    align-items: center;
}
.fx-arrow {
    margin-left: 10px;
    color: #b0b0b0;
}
.fx-badge {
    margin-left: 6px;
    width: 24px;
    height: 30px;
    line-height: 28px;
    text-align: center;
    background: #181818;
    font-family: "Liberation Serif", serif;
    font-style: italic;
    font-size: 22px;
    color: #b4b4b4;
}
.fx-name {
    margin-left: 5px;
    width: 230px;
    font-weight: 700;
    color: #a4a4a4;
}
.fx-reset {
    color: #2d8ceb;
}
.fx-scroll {
    position: absolute;
    left: 495px;
    right: 0;
    top: 78px;
    height: 697px;
    background: #2b2b2b;
}

/* composicion */
.comp-crumb {
    height: 43px;
    padding: 7px 0 0 31px;
    border-bottom: 3px solid #121212;
}
.comp-chip {
    display: block;
    width: 113px;
    height: 28px;
    background: #171717;
    border-radius: 2px;
    color: #2d8ceb;
    line-height: 28px;
    padding-left: 14px;
}
.viewer {
    flex: 1;
    padding: 26px 24px 34px 25px;
}
.comp-frame {
    height: 589px;
    background: #808080;
    display: flex;
    align-items: center;
    justify-content: center;
    overflow: hidden;
}
.comp-text {
    font-family: "Liberation Serif", serif;
    font-weight: 700;
    font-size: 262px;
    line-height: 300px;
    letter-spacing: 49px;
    color: #fff;
    margin-right: -49px;
    transform: scaleX(.85);
    position: relative;
    top: -3px;
}
.viewer-bar {
    height: 37px;
    border-top: 2px solid #171717;
    display: flex;
    align-items: center;
    padding: 0 0 3px 10px;
}
.select {
    height: 28px;
    background: #1b1b1b;
    border-radius: 3px;
    display: flex;
    align-items: center;
    justify-content: space-between;
    padding: 0 10px;
    color: #c4c4c4;
}
.select-zoom {
    width: 111px;
}
.select-res {
    width: 143px;
    margin-left: 19px;
}
.vb-icons {
    display: flex;
    align-items: center;
    margin-left: 20px;
    gap: 0;
}
.vb-box, .vb-cell {
    width: 36px;
    height: 30px;
    display: flex;
    align-items: center;
    justify-content: center;
}
.vb-box {
    background: #171717;
    border-radius: 3px;
}
.vb-sep {
    width: 2px;
    height: 24px;
    background: #333;
    flex: none;
}
.vb-icons + .vb-sep {
    margin-left: 7px;
}
.vb-rgb {
    margin-left: 17px;
}
.vb-exp {
    margin-left: 17px;
}
.vb-value {
    margin-left: 10px;
    color: #2d8ceb;
}
.vb-cam {
    margin-left: 38px;
}
.vb-snap {
    margin-left: 13px;
    margin-right: 14px;
}
.vb-time {
    width: 120px;
    text-align: center;
    color: #a8a8a8;
}

/* linea de tiempo */
.timeline {
    margin-top: 6px;
    flex: 1;
    width: 1635px;
    display: flex;
}
.tl-left {
    width: 995px;
}
.tl-tab {
    height: 48px;
    display: flex;
    align-items: center;
    padding-left: 16px;
}
.tl-tab .tab-x {
    width: 26px;
}
.tl-tab-name {
    margin-left: 16px;
    width: 77px;
    color: #cfcfcf;
}
.tl-controls {
    height: 57px;
    display: flex;
    align-items: center;
    position: relative;
    padding-bottom: 3px;
    border-bottom: 2px solid #222;
}
.tl-time {
    width: 154px;
    padding-left: 17px;
}
.tl-timecode {
    font-size: 25px;
    line-height: 28px;
    font-weight: 700;
    color: #2d8ceb;
    letter-spacing: .3px;
}
.tl-frames {
    font-size: 15.500px;
    line-height: 18px;
    color: #1672b8;
    white-space: nowrap;
}
.tl-search {
    width: 567px;
    height: 30px;
    background: #191919;
    border-radius: 3px;
    display: flex;
    align-items: center;
    padding-left: 10px;
    color: #c0c0c0;
    position: relative;
}
.caret {
    border-left: 4px solid transparent;
    border-right: 4px solid transparent;
    border-top: 4px solid #c0c0c0;
    margin: 8px 0 0 -4px;
}
.tc-icon {
    color: #c4c4c4;
    margin-left: 15px;
}
.tc-icon:nth-of-type(2) {
    margin-left: 25px;
}
.tc-graph {
    margin-left: 30px;
}
.layer-head {
    height: 31px;
    background: #2b2b2b;
    display: flex;
    align-items: center;
    color: #c0c0c0;
    font-size: 15.500px;
    padding-left: 10px;
}
.h-eye {
    margin-left: 0;
}
.h-audio {
    margin-left: 4px;
}
.h-dot {
    width: 12px;
    height: 12px;
    border-radius: 50%;
    background: #c0c0c0;
    margin-left: 8px;
}
.h-lock {
    margin-left: 12px;
}
.h-sep {
    width: 2px;
    height: 18px;
    background: #141414;
    flex: none;
}
.s1 { margin-left: 10px; }
.h-tag { margin-left: 20px; }
.s2 { margin-left: 10px; }
.h-num { margin-left: 10px; width: 14px; color: #8c8c8c; }
.s3 { margin-left: 26px; }
.h-name { margin-left: 8px; width: 326px; color: #a0a0a0; }
.s4 { margin-left: 0; }
.h-switches {
    display: flex;
    align-items: center;
    width: 198px;
    margin-left: 6px;
    justify-content: space-between;
    padding-right: 16px;
}
.sw-fx {
    font-family: "Liberation Serif", serif;
    font-style: italic;
    font-size: 21px;
    line-height: 18px;
}
.h-parent {
    margin-left: 8px;
    width: 182px;
    color: #8e8e8e;
}
.s5 { margin-left: 18px; }

.layer {
    height: 27px;
    background: #333;
    display: flex;
    align-items: center;
    padding-left: 8px;
    position: relative;
    border-bottom: 1px solid #222;
}
.layer-selected {
    background: #4a4a4a;
    border-bottom: 0;
    height: 26px;
    margin-top: 1px;
}
.cell-box {
    width: 21px;
    height: 22px;
    background: #262626;
    display: flex;
    align-items: center;
    justify-content: center;
    color: #c8c8c8;
}
.layer-selected .cell-box {
    background: #3a3a3a;
}
.cell-gap {
    width: 53px;
}
.cell-gap-s {
    width: 28px;
}
.cell-lock {
    margin-right: 0;
}
.cell-lock-s {
    margin-left: 4px;
}
.l-chev {
    margin-left: 18px;
    color: #a8a8a8;
}
.l-swatch {
    width: 20px;
    height: 21px;
    background: #b83a3a;
    margin-left: 12px;
}
.l-num {
    width: 14px;
    margin-left: 14px;
    font-weight: 700;
    color: #a8a8a8;
    font-size: 17px;
}
.l-t {
    margin-left: 32px;
    width: 16px;
    font-family: "Liberation Serif", serif;
    font-size: 20px;
    font-weight: 700;
    color: #c4c4c4;
}
.l-name {
    margin-left: 2px;
    width: 304px;
    height: 26px;
    line-height: 26px;
    padding-left: 5px;
    font-weight: 700;
    color: #a8a8a8;
    flex: none;
}
.layer-selected .l-name {
    background: #9e9e9e;
    color: #1e1e1e;
}
.l-switches {
    display: flex;
    gap: 3px;
    margin-left: 9px;
    width: 96px;
    color: #c4c4c4;
}
.sw, .sw-empty {
    width: 21px;
    height: 22px;
    display: flex;
    align-items: center;
    justify-content: center;
}
.sw {
    background: #272727;
}
.layer-selected .sw {
    background: #3a3a3a;
}
.sw-dim {
    color: #707070;
}
.l-boxes {
    margin-left: 26px;
    width: 71px;
}
.l-spiral {
    margin-left: 31px;
    color: #a8a8a8;
}
.l-parent {
    width: 146px;
    height: 24px;
    margin-left: 11px;
    background: #1d1d1d;
    display: flex;
    align-items: center;
    justify-content: space-between;
    padding: 0 9px 0 11px;
    color: #c8c8c8;
}

/* lado derecho de la linea de tiempo */
.tl-right {
    flex: 1;
    position: relative;
    border-left: 2px solid #141414;
    margin-left: 2px;
    display: flex;
    flex-direction: column;
    padding-top: 56px;
}
.nav-bar, .work-bar {
    display: flex;
    margin-right: 31px;
}
.nav-bar {
    height: 13px;
}
.nav-fill {
    flex: 1;
    background: #686868;
}
.nav-cap {
    width: 10px;
    background: #2d8ceb;
    border-radius: 7px 0 0 7px;
}
.nav-cap-r {
    border-radius: 0 7px 7px 0;
}
.ruler {
    height: 35px;
    display: grid;
    grid-template-columns: repeat(5, 116.700px) 1px;
    padding-left: 11px;
    margin-right: 31px;
    font-size: 15.500px;
    color: #9c9c9c;
}
.tick {
    position: relative;
    padding-top: 6px;
    white-space: nowrap;
}
.tick::after {
    content: "";
    position: absolute;
    left: 0;
    bottom: 0;
    height: 8px;
    width: 1px;
    background: #a0a0a0;
}
.tick:not(.tick-0) {
    text-indent: -14px;
}
.tick-0 {
    text-indent: -14px;
}
.tick-0::after {
    display: none;
}
.work-bar {
    height: 24px;
    margin-right: 31px;
}
.work-fill {
    flex: 1;
    background: #666;
}
.work-cap {
    width: 11px;
    background: #2d8ceb;
    border-radius: 5px 0 0 5px;
}
.work-cap-r {
    width: 9px;
    border-radius: 0 5px 5px 0;
}
.preview-line {
    height: 4px;
    margin: 3px 42px 1px 11px;
    background: #10c020;
}
.track {
    height: 27px;
    background: #333;
    padding-left: 11px;
    padding-right: 42px;
}
.track-selected {
    height: 26px;
    margin-top: 1px;
    background: #484848;
    margin-right: 31px;
    padding-right: 11px;
}
.clip {
    height: 100%;
}
.clip-1 {
    background: #7a3a3a;
    height: 26px;
}
.clip-2 {
    background: #b04e4e;
    border-top: 1px solid #d88c84;
    position: relative;
}
.mark {
    position: absolute;
    border: 1px solid #46587a;
}
.mark-a {
    left: 11px;
    top: 4px;
    width: 26px;
    height: 25px;
}
.mark-b {
    left: 70px;
    top: 6px;
    width: 134px;
    height: 22px;
}
.track-empty {
    flex: 1;
    background: #363636;
    margin-left: 11px;
    margin-right: 42px;
}
.playhead {
    position: absolute;
    left: 10px;
    top: 72px;
    bottom: 0;
    width: 1px;
    background: #2d8ceb;
}
.playhead-head {
    position: absolute;
    left: 0;
    top: 78px;
    border-left: 10.500px solid transparent;
    border-right: 10.500px solid transparent;
    border-top: 22px solid #2d8ceb;
}
.end-shield {
    position: absolute;
    right: 5px;
    top: 104px;
}
.end-tool {
    position: absolute;
    right: 4px;
    top: 132px;
}

/* columna derecha */
.side {
    width: 336px;
    margin-left: 6px;
    display: flex;
    flex-direction: column;
}
.side-head {
    height: 49px;
    display: flex;
    align-items: center;
    justify-content: space-between;
    padding: 0 12px 0 19px;
    color: #c8c8c8;
}
.preview-panel {
    height: 99px;
    margin-bottom: 2px;
}
.transport {
    display: flex;
    align-items: center;
    justify-content: center;
    gap: 20px;
    color: #b4b4b4;
    padding-top: 1px;
}
.side-closed {
    height: 47px;
    margin-bottom: 2px;
    line-height: 47px;
    padding-left: 19px;
    color: #a8a8a8;
}
.presets {
    height: 428px;
    margin: 1px 0 1px -1px;
    width: 337px;
    border: 2px solid #2a7fd4;
}
.presets-head {
    height: 45px;
    padding-left: 18px;
    padding-right: 10px;
}
.presets-search {
    height: 30px;
    margin: 3px 7px 0 7px;
    background: #171717;
    border-radius: 3px;
    display: flex;
    align-items: center;
    padding: 0 6px 0 11px;
}
.ps-value {
    margin-left: 8px;
    color: #d0d0d0;
    flex: 1;
}
.tree {
    margin-top: 6px;
}
.tree li {
    height: 28px;
    display: flex;
    align-items: center;
    border-bottom: 1px solid #202020;
    color: #a0a0a0;
    position: relative;
}
.tw {
    color: #b0b0b0;
    margin-right: 3px;
}
.d0 { padding-left: 11px; }
.d1 { padding-left: 39px; }
.d2 { padding-left: 67px; }
.d3 { padding-left: 110px; }
.d4 { padding-left: 53px; }
.folder {
    color: #b8b8b8;
    margin-right: 9px;
}
.d1 .tw, .d2 .tw {
    margin-right: 4px;
}
.badge {
    margin-right: 10px;
}
.b2 {
    margin-right: 7px;
}
.t-hover {
    background: #363636;
}
.t-picked {
    background: #9a9a9a;
    color: #2a2a2a;
    padding: 0 10px 0 3px;
    height: 23px;
    line-height: 23px;
}
.t-after {
    margin-left: 3px;
}
.t-first {
    color: #a8a8a8;
}
.presets-foot {
    height: 35px;
    border-top: 2px solid #101010;
    display: flex;
    align-items: center;
    justify-content: flex-end;
    padding-right: 11px;
}

.green-arrow {
    position: absolute;
    left: 0;
    top: 0;
    pointer-events: none;
}
```
